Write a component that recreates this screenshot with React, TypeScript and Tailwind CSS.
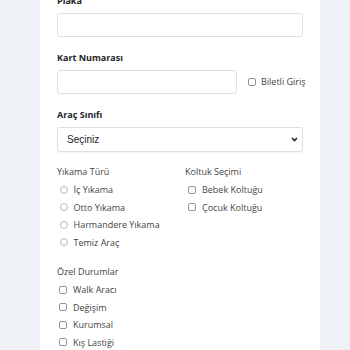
import React from "react";

const font = { fontFamily: '"Open Sans", "Noto Sans", sans-serif' };

function Radio({ label }: { label: string }) {
    return (
        <label className="flex h-[17.5px] items-center">
            <span className="ml-[2.5px] h-[8px] w-[8px] rounded-full border border-[#b4b9bf] bg-white" />
            <span className="ml-[6px] text-[9px] text-[#444]">{label}</span>
        </label>
    );
}

function Check({ label }: { label: string }) {
    return (
        <label className="flex h-[17.5px] items-center">
            <span className="ml-[2px] h-[8px] w-[8px] rounded-[2px] border border-[#8f959b] bg-white" />
            <span className="ml-[6px] text-[9px] text-[#444]">{label}</span>
        </label>
    );
}

export default function App() {
    return (
        <div className="h-[350px] overflow-hidden bg-[#eef1f6]" style={font}>
            {/* Form card (page is scrolled, so the top is cut off) */}
            <div className="ml-[40px] mr-[30px] -mt-[5px] min-h-[400px] bg-white px-[17px]">
                {/* Plaka */}
                <div className="text-[9px] font-bold leading-[12px] text-[#212529]">Plaka</div>
                <div className="mt-[6px] h-[24px] rounded-[3px] border border-[#dcdfe3]" />

                {/* Kart Numarası */}
                <div className="mt-[15px] text-[9px] font-bold leading-[12px] text-[#212529]">Kart Numarası</div>
                <div className="mt-[6px] flex items-center">
                    <div className="h-[24px] w-[180px] shrink-0 rounded-[3px] border border-[#dcdfe3]" />
                    <label className="ml-[11px] flex items-center whitespace-nowrap">
                        <span className="h-[8px] w-[8px] shrink-0 rounded-[2px] border border-[#8f959b]" />
                        <span className="ml-[5px] text-[9px] text-[#444]">Biletli Giriş</span>
                    </label>
                </div>

                {/* Araç Sınıfı */}
                <div className="mt-[15px] text-[9px] font-bold leading-[12px] text-[#212529]">Araç Sınıfı</div>
                <div className="mt-[6px] flex h-[25px] items-center justify-between rounded-[3px] border border-[#dcdfe3] pl-[9px] pr-[4px] shadow-[0_1px_1px_rgba(0,0,0,0.04)]">
                    <span className="text-[10px] text-[#222]" style={{ fontFamily: '"Liberation Sans", Arial, sans-serif' }}>
                        Seçiniz
                    </span>
                    <svg width="7" height="5" viewBox="0 0 7 5" fill="none">
                        <path d="M1 1l2.5 2.5L6 1" stroke="#222" strokeWidth="1.6" />
                    </svg>
                </div>

                {/* Yıkama Türü / Koltuk Seçimi */}
                <div className="mt-[14px] grid grid-cols-[128px_1fr]">
                    <div>
                        <div className="text-[9px] leading-[12px] text-[#444]">Yıkama Türü</div>
                        <div className="mt-[3px]">
                            <Radio label="İç Yıkama" />
                            <Radio label="Otto Yıkama" />
                            <Radio label="Harmandere Yıkama" />
                            <Radio label="Temiz Araç" />
                        </div>
                    </div>
                    <div>
                        <div className="text-[9px] leading-[12px] text-[#444]">Koltuk Seçimi</div>
                        <div className="mt-[3px] pl-[1px]">
                            <Check label="Bebek Koltuğu" />
                            <Check label="Çocuk Koltuğu" />
                        </div>
                    </div>
                </div>

                {/* Özel Durumlar */}
                <div className="mt-[15px] text-[9px] leading-[12px] text-[#444]">Özel Durumlar</div>
                <div className="mt-[3px]">
                    <Check label="Walk Aracı" />
                    <Check label="Değişim" />
                    <Check label="Kurumsal" />
                    <Check label="Kış Lastiği" />
                </div>
            </div>
        </div>
    );
}
